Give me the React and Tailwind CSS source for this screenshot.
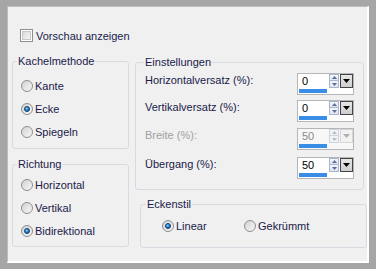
import React from 'react'

const ink = 'text-[#1a1a4a]'

function Radio({ checked }){
  return (
    <div className="relative flex h-[12px] w-[12px] shrink-0 items-center justify-center rounded-full border border-[#8c8e90] bg-[linear-gradient(135deg,#d2d2d2,#f8f8f8)]">
      {checked && <div className="h-[6px] w-[6px] rounded-full border border-[#0c3c6c] bg-[radial-gradient(circle_at_40%_35%,#8fd0ff,#1f78c8_55%,#0b4a8a)]" />}
    </div>
  )
}

function Option({ label, checked }){
  return (
    <div className="flex h-[23px] items-center gap-[2px]">
      <Radio checked={checked} />
      <span className={ink}>{label}</span>
    </div>
  )
}

function Spinner({ value, disabled }){
  const arrow = disabled ? 'border-[#cfd4dc] bg-[#f2f3f5]' : 'border-[#a9b6cc] bg-[linear-gradient(#f4f7fc,#dde5f1)]'
  const tri = disabled ? '#b8bcc4' : '#5b6c9a'
  return (
    <div className={`flex h-[22px] w-[57px] border border-[#b6b6b6] ${disabled ? 'bg-[#f7f7f7]' : 'bg-white'}`}>
      <div className="flex w-[30px] flex-col">
        <div className={`h-[15px] pl-[4px] leading-[15px] ${disabled ? 'text-[#8a8a8a]' : 'text-black'}`}>{value}</div>
        <div className="mx-[1px] mb-[1px] mt-auto h-[4px] bg-[#3a8de6]" />
      </div>
      <div className="ml-[1px] flex w-[10px] flex-col">
        <div className={`flex h-[7px] items-center justify-center border ${arrow}`}>
          <svg width="5" height="3" viewBox="0 0 5 3"><path d="M2.5 0L5 3H0z" fill={tri} /></svg>
        </div>
        <div className={`flex h-[7px] items-center justify-center border border-t-0 ${arrow}`}>
          <svg width="5" height="3" viewBox="0 0 5 3"><path d="M0 0h5L2.5 3z" fill={tri} /></svg>
        </div>
      </div>
      <div className={`ml-[1px] flex h-[14px] w-[13px] items-center justify-center border ${disabled ? 'border-[#d6d6d6] bg-[#f2f2f2]' : 'border-[#444] bg-[linear-gradient(#e6e6e6,#cfcfcf)]'}`}>
        <svg width="7" height="4" viewBox="0 0 7 4"><path d="M0 0h7L3.5 4z" fill={disabled ? '#b0b0b0' : '#000'} /></svg>
      </div>
    </div>
  )
}

function Row({ label, value, disabled, className = '' }){
  return (
    <div className={`flex items-start justify-between ${className}`}>
      <span className={`mt-[-1px] leading-[16px] ${disabled ? 'text-[#a0a0a0]' : ink}`}>{label}</span>
      <Spinner value={value} disabled={disabled} />
    </div>
  )
}

export default function App(){
  return (
    <div className="h-[269px] w-[376px] bg-[#a6a6a6] pb-[6px] pl-[7px] pr-[7px] pt-[6px] font-['Liberation_Sans',Arial,sans-serif] text-[11px] leading-[14px]">
      <div className="h-full w-full border border-b-2 border-r-2 border-[#bdbdbd] border-b-white border-r-white bg-[#f0f0f0] pl-[4px] pt-[22px]">
        <div className="ml-[8px] flex h-[13px] items-center gap-[3px]">
          <div className="h-[13px] w-[13px] border border-[#8e8f8f] bg-white p-[1px]">
            <div className="h-full w-full border border-[#c4c6c8] bg-[linear-gradient(135deg,#dadada,#f6f6f6)]" />
          </div>
          <span className={ink}>Vorschau anzeigen</span>
        </div>

        <div className="flex">
          <div className="mt-[12px] flex w-[117px] flex-col gap-[8px]">
            <fieldset className="h-[95px] rounded-[3px] border border-[#d5dbe0]">
              <legend className={`ml-[4px] px-[1px] ${ink}`}>Kachelmethode</legend>
              <div className="pl-[8px] pt-[6px]">
                <Option label="Kante" />
                <Option label="Ecke" checked />
                <Option label="Spiegeln" />
              </div>
            </fieldset>
            <fieldset className="h-[90px] rounded-[3px] border border-[#d5dbe0]">
              <legend className={`ml-[4px] px-[1px] ${ink}`}>Richtung</legend>
              <div className="pl-[8px] pt-[2px]">
                <Option label="Horizontal" />
                <Option label="Vertikal" />
                <Option label="Bidirektional" checked />
              </div>
            </fieldset>
          </div>

          <div className="ml-[6px] mt-[13px] flex flex-col gap-[7px]">
            <fieldset className="h-[135px] w-[229px] rounded-[3px] border border-[#d5dbe0]">
              <legend className={`ml-[8px] px-[1px] ${ink}`}>Einstellungen</legend>
              <div className="pl-[9px] pr-[9px] pt-[4px]">
                <Row label="Horizontalversatz (%):" value="0" />
                <Row label="Vertikalversatz (%):" value="0" className="mt-[5px]" />
                <Row label="Breite (%):" value="50" disabled className="mt-[6px]" />
                <Row label="Übergang (%):" value="50" className="mt-[7px]" />
              </div>
            </fieldset>
            <fieldset className="ml-[5px] h-[51px] w-[227px] rounded-[3px] border border-[#d5dbe0]">
              <legend className={`ml-[5px] px-[1px] ${ink}`}>Eckenstil</legend>
              <div className="flex pl-[21px] pt-[3px]">
                <div className="w-[82px]"><Option label="Linear" checked /></div>
                <Option label="Gekrümmt" />
              </div>
            </fieldset>
          </div>
        </div>
      </div>
    </div>
  )
}
